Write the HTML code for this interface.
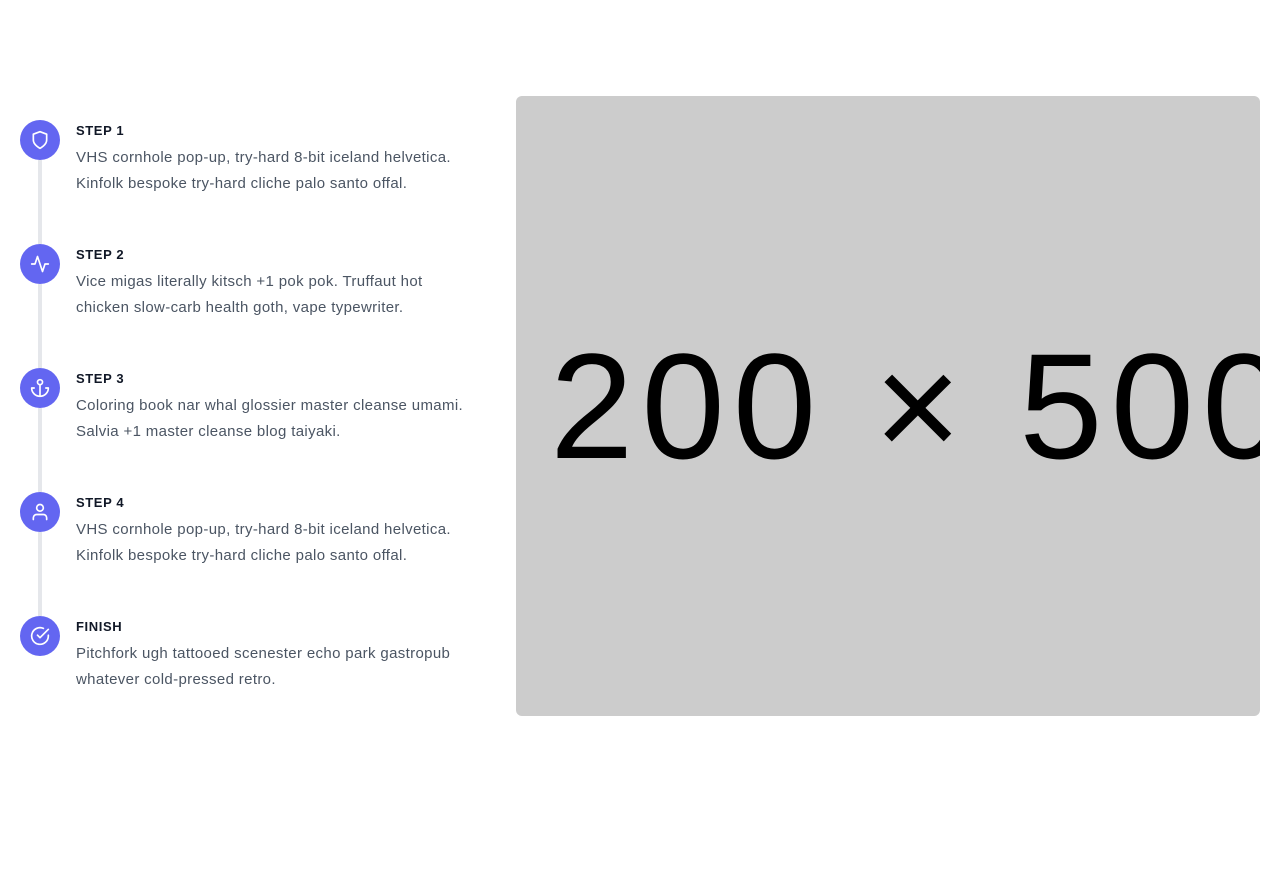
<!DOCTYPE html>
<html><head><style>
body{margin:0;background:#fff;font-family:"Liberation Sans",sans-serif;}
.step{position:absolute;left:20px;width:460px;height:124px;}
.line{position:absolute;left:18px;top:40px;width:4px;height:84px;background:#e5e7eb;}
.c{position:absolute;left:0;top:0;width:40px;height:40px;border-radius:50%;background:#6366f1;display:flex;align-items:center;justify-content:center;}
.t{position:absolute;left:56px;top:3px;font-size:13px;font-weight:bold;letter-spacing:0.6px;color:#111827;}
.p{position:absolute;left:56px;top:25px;font-size:15px;line-height:26px;color:#4b5563;width:440px;white-space:nowrap;letter-spacing:0.35px;}
svg{width:20px;height:20px;fill:none;stroke:#fff;stroke-width:2;stroke-linecap:round;stroke-linejoin:round;}
.img{position:absolute;left:516px;top:96px;width:744px;height:620px;background:#cccccc;border-radius:6px;overflow:hidden;}
.img span{position:absolute;left:34px;top:310px;transform:translateY(-50%);font-size:150px;letter-spacing:8px;line-height:1;white-space:nowrap;color:#000;}
</style></head><body>
<div class="step" style="top:120px"><div class="line"></div><div class="c"><svg viewBox="0 0 24 24"><path d="M12 22s8-4 8-10V5l-8-3-8 3v7c0 6 8 10 8 10z"/></svg></div><div class="t">STEP 1</div><div class="p">VHS cornhole pop-up, try-hard 8-bit iceland helvetica.<br>Kinfolk bespoke try-hard cliche palo santo offal.</div></div>
<div class="step" style="top:244px"><div class="line"></div><div class="c"><svg viewBox="0 0 24 24"><path d="M22 12h-4l-3 9L9 3l-3 9H2"/></svg></div><div class="t">STEP 2</div><div class="p">Vice migas literally kitsch +1 pok pok. Truffaut hot<br>chicken slow-carb health goth, vape typewriter.</div></div>
<div class="step" style="top:368px"><div class="line"></div><div class="c"><svg viewBox="0 0 24 24"><circle cx="12" cy="5" r="3"/><path d="M12 22V8M5 12H2a10 10 0 0020 0h-3"/></svg></div><div class="t">STEP 3</div><div class="p">Coloring book nar whal glossier master cleanse umami.<br>Salvia +1 master cleanse blog taiyaki.</div></div>
<div class="step" style="top:492px"><div class="line"></div><div class="c"><svg viewBox="0 0 24 24"><path d="M20 21v-2a4 4 0 00-4-4H8a4 4 0 00-4 4v2"/><circle cx="12" cy="7" r="4"/></svg></div><div class="t">STEP 4</div><div class="p">VHS cornhole pop-up, try-hard 8-bit iceland helvetica.<br>Kinfolk bespoke try-hard cliche palo santo offal.</div></div>
<div class="step" style="top:616px"><div class="c"><svg viewBox="0 0 24 24"><path d="M22 11.08V12a10 10 0 11-5.93-9.14"/><path d="M22 4L12 14.01l-3-3"/></svg></div><div class="t">FINISH</div><div class="p">Pitchfork ugh tattooed scenester echo park gastropub<br>whatever cold-pressed retro.</div></div>
<div class="img"><span>200 × 500</span></div>
</body></html>
